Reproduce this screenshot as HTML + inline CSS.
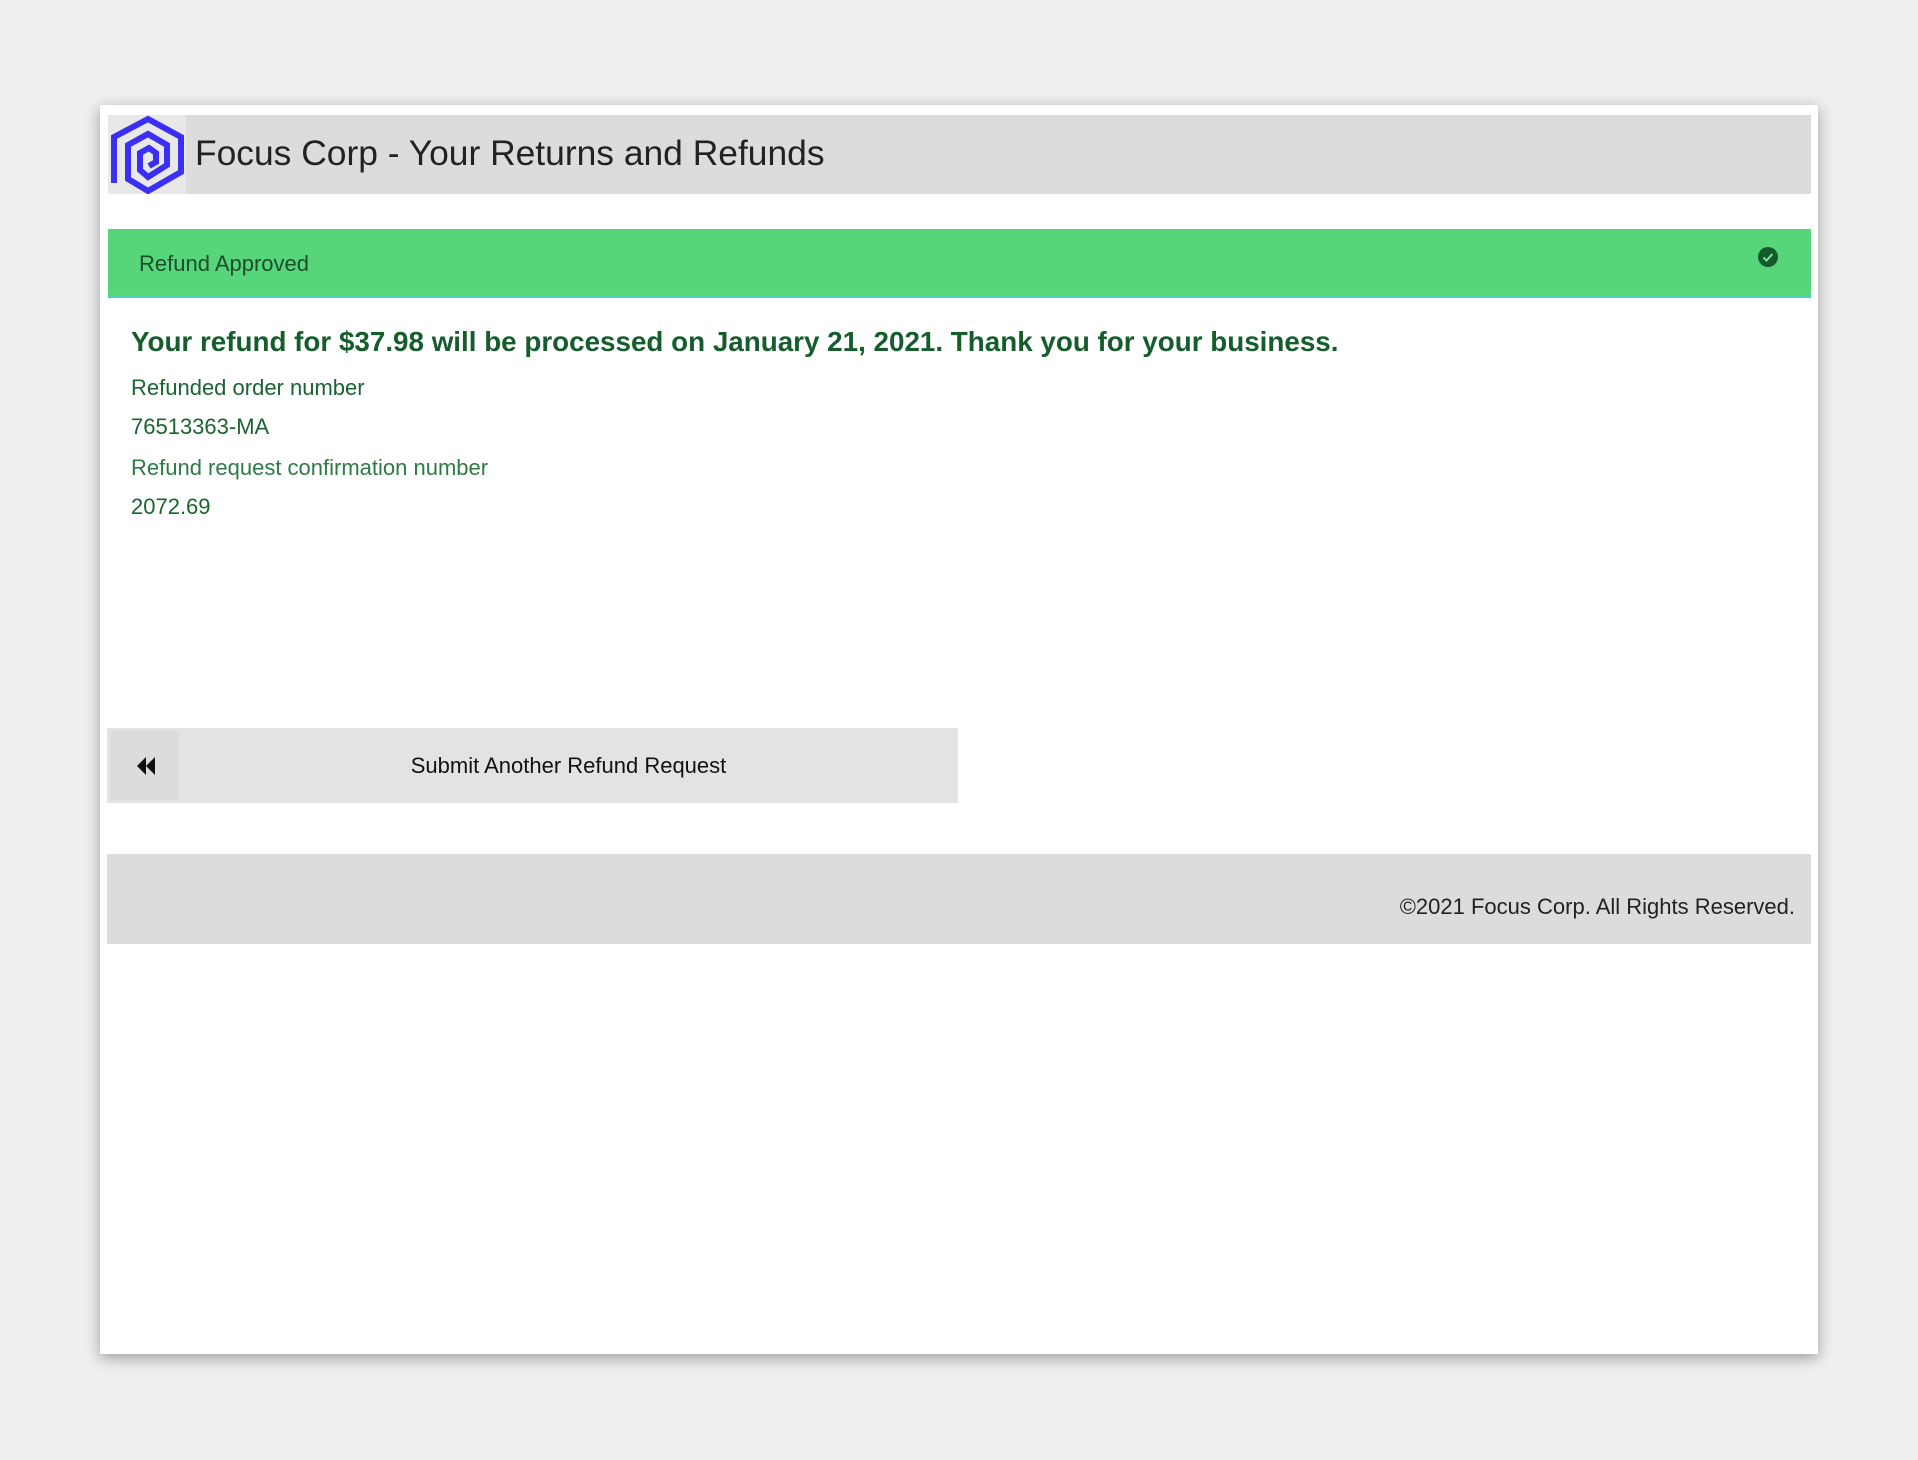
<!DOCTYPE html>
<html><head><meta charset="utf-8">
<style>
html,body{margin:0;padding:0;}
body{width:1918px;height:1460px;background:#efefef;position:relative;overflow:hidden;font-family:"Liberation Sans",sans-serif;}
.card{position:absolute;left:100px;top:105px;width:1718px;height:1249px;background:#fff;box-shadow:0 4px 14px rgba(0,0,0,0.35);}
.hdr{position:absolute;left:108px;top:115px;width:1703px;height:79px;background:#dcdcdc;}
.logo{position:absolute;left:108px;top:115px;width:78px;height:79px;background:#e8e8e8;}
.title{position:absolute;left:195px;top:133px;font-size:35.4px;color:#222;white-space:nowrap;}
.banner{position:absolute;left:108px;top:229px;width:1703px;height:66px;background:#57d57b;border-bottom:3px solid #42d9b0;}
.banner .t{position:absolute;left:31px;top:22px;font-size:22px;color:#1d4d2a;}
.chk{position:absolute;left:1758px;top:247px;}
.txt{position:absolute;left:131px;color:#1c6332;white-space:nowrap;}
.h{top:326px;font-size:27.8px;font-weight:bold;color:#155d2c;}
.btn{position:absolute;left:107px;top:728px;width:851px;height:75px;background:#e3e3e3;}
.btn .ic{position:absolute;left:3px;top:3px;width:69px;height:69px;background:#dcdcdc;}
.btn .l{position:absolute;left:72px;right:0;top:25px;text-align:center;font-size:22px;color:#111;}
.ftr{position:absolute;left:107px;top:854px;width:1704px;height:90px;background:#dcdcdc;}
.ftr .l{position:absolute;right:16px;top:40px;font-size:22px;color:#222;}
</style></head><body>
<div class="card"></div>
<div class="hdr"></div>
<div class="logo">
<svg width="78" height="79" viewBox="0 0 78 79">
<polyline points="6,68 6,22 40,4 73,22 73,57 40,76 20,64 20,30 40,19 59,30 59,50 40,62 32,55 32,38 41,33 48,38 48,47 41,51" fill="none" stroke="#3b2ff5" stroke-width="6" stroke-linejoin="miter"/>
</svg>
</div>
<div class="title">Focus Corp - Your Returns and Refunds</div>
<div class="banner"><div class="t">Refund Approved</div></div>
<svg class="chk" width="20" height="20" viewBox="0 0 20 20"><circle cx="10" cy="10" r="10" fill="#145a2b"/><polyline points="5.5,10.5 8.5,13.5 14.5,7" fill="none" stroke="#7fe0a0" stroke-width="2"/></svg>
<div class="txt h">Your refund for $37.98 will be processed on January 21, 2021. Thank you for your business.</div>
<div class="txt" style="top:375px;font-size:22px;">Refunded order number</div>
<div class="txt" style="top:414px;font-size:22px;">76513363-MA</div>
<div class="txt" style="top:455px;font-size:22px;color:#2e7a45;">Refund request confirmation number</div>
<div class="txt" style="top:494px;font-size:22px;">2072.69</div>
<div class="btn"><div class="ic">
<svg style="position:absolute;left:26px;top:26px" width="20" height="18" viewBox="0 0 20 18"><polygon points="10,0 10,18 1,9" fill="#111"/><polygon points="19,0 19,18 10,9" fill="#111"/></svg>
</div><div class="l">Submit Another Refund Request</div></div>
<div class="ftr"><div class="l">©2021 Focus Corp. All Rights Reserved.</div></div>
</body></html>
